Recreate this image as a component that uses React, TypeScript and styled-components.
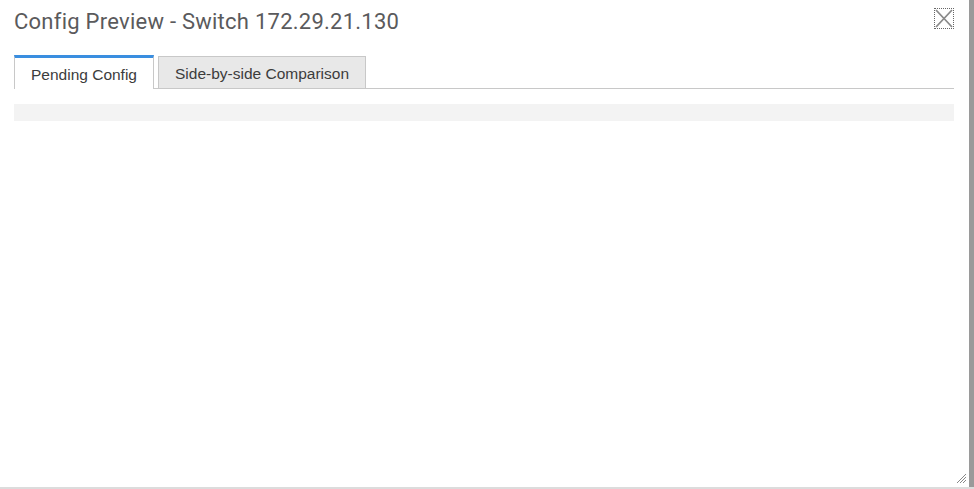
import styled, { createGlobalStyle } from "styled-components";

const Global = createGlobalStyle`
  html, body {
    margin: 0;
    padding: 0;
    background: #fff;
  }
  body {
    font-family: "Liberation Sans", Arial, sans-serif;
  }
`;

const Dialog = styled.div`
  position: relative;
  width: 974px;
  height: 489px;
  box-sizing: border-box;
  display: flex;
  background: #fff;
  border-bottom: 2px solid #dcdcdc;
`;

const Body = styled.div`
  flex: 1;
  display: flex;
  flex-direction: column;
  padding: 0 15px 0 14px;
`;

const ScrollEdge = styled.div`
  width: 5px;
  background: #9a9a9a;
`;

const Header = styled.div`
  display: flex;
  align-items: flex-start;
  justify-content: space-between;
  height: 55px;
`;

const Title = styled.h1`
  margin: 9px 0 0;
  font-family: Roboto, "Liberation Sans", sans-serif;
  font-size: 22px;
  font-weight: 400;
  color: #5a5a5c;
  letter-spacing: 0.25px;
`;

const CloseButton = styled.button`
  margin: 8px 0 0;
  padding: 0;
  width: 20px;
  height: 21px;
  border: 1px dotted #666;
  background: transparent;
  display: flex;
  align-items: center;
  justify-content: center;
  cursor: pointer;
`;

const Tabs = styled.div`
  display: flex;
  align-items: flex-end;
  gap: 4px;
  border-bottom: 1px solid #c8c8c8;
`;

const Tab = styled.div<{ $active?: boolean }>`
  box-sizing: border-box;
  height: ${(p) => (p.$active ? "34px" : "32px")};
  padding: ${(p) => (p.$active ? "2px 16px 0" : "3px 16px 0")};
  display: flex;
  align-items: center;
  font-size: 15.5px;
  color: #3c3c3c;
  background: ${(p) => (p.$active ? "#fff" : "#e8e8e8")};
  border: 1px solid #c8c8c8;
  border-top: ${(p) => (p.$active ? "3px solid #3a8ee0" : "1px solid #c8c8c8")};
  border-bottom: none;
  margin-bottom: ${(p) => (p.$active ? "-1px" : "0")};
`;

const Toolbar = styled.div`
  margin-top: 15px;
  height: 17px;
  background: #f3f3f3;
`;

const Grip = styled.svg`
  position: absolute;
  right: 7px;
  bottom: 3px;
`;

export default function App() {
  return (
    <>
      <Global />
      <Dialog>
        <Body>
          <Header>
            <Title>Config Preview - Switch 172.29.21.130</Title>
            <CloseButton aria-label="close">
              <svg width="18" height="19" viewBox="0 0 18 19">
                <path d="M1 1 L17 18 M17 1 L1 18" stroke="#8a8a8a" strokeWidth="1.8" />
              </svg>
            </CloseButton>
          </Header>
          <Tabs>
            <Tab $active>Pending Config</Tab>
            <Tab>Side-by-side Comparison</Tab>
          </Tabs>
          <Toolbar />
        </Body>
        <ScrollEdge />
        <Grip width="11" height="11" viewBox="0 0 11 11">
          <path d="M10 1 L1 10 M10 4 L4 10 M10 7 L7 10" stroke="#888" strokeWidth="1" />
        </Grip>
      </Dialog>
    </>
  );
}
